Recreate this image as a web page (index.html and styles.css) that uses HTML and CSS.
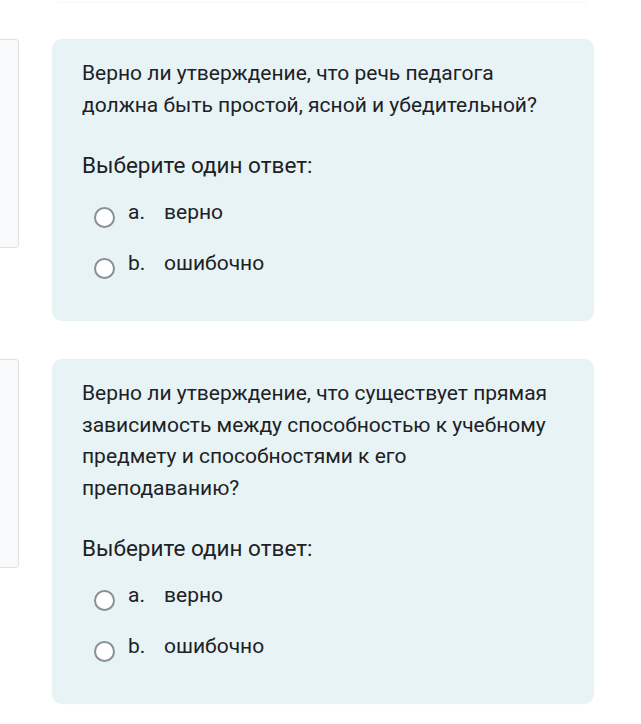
FILE: index.html
```html
<!DOCTYPE html>
<html lang="ru">
<head>
  <meta charset="UTF-8" />
  <meta name="viewport" content="width=device-width, initial-scale=1.0"/>
  <title>Тест</title>
  <link rel="stylesheet" href="styles.css">
</head>
<body>

<div class="prev-card"></div>

<div class="que">
  <div class="info"></div>
  <div class="content">
    <div class="qtext">Верно ли утверждение, что речь педагога должна быть простой, ясной и убедительной?</div>
    <div class="prompt">Выберите один ответ:</div>
    <div class="answer">
      <label class="opt"><span class="radio"></span><span class="letter">a.</span><span>верно</span></label>
      <label class="opt"><span class="radio"></span><span class="letter">b.</span><span>ошибочно</span></label>
    </div>
  </div>
</div>

<div class="que">
  <div class="info"></div>
  <div class="content">
    <div class="qtext">Верно ли утверждение, что существует прямая зависимость между способностью к учебному предмету и способностями к его преподаванию?</div>
    <div class="prompt">Выберите один ответ:</div>
    <div class="answer">
      <label class="opt"><span class="radio"></span><span class="letter">a.</span><span>верно</span></label>
      <label class="opt"><span class="radio"></span><span class="letter">b.</span><span>ошибочно</span></label>
    </div>
  </div>
</div>

</body>
</html>
```

FILE: styles.css
```css
body {
  margin: 0;
  background: #fff;
  font-family: Roboto, "Noto Sans", sans-serif;
  color: #1d2125;
}
.prev-card {
  height: 1px;
  margin: 0 53px 38px 57px;
  background: #fff;
  border-radius: 0 0 8px 8px;
  box-shadow: 0 1px 3px rgba(0, 0, 0, 0.08);
}
.que {
  display: flex;
  align-items: flex-start;
  gap: 33px;
  margin-bottom: 38px;
}
.info {
  width: 18px;
  height: 207px;
  background: #f8f9fa;
  border: 1px solid #dee2e6;
  border-left: none;
  border-radius: 0 4px 4px 0;
}
.content {
  width: 542px;
  box-sizing: border-box;
  padding: 19px 30px 42px 30px;
  background: #e7f3f5;
  border-radius: 10px;
  box-shadow: 0 0 2px rgba(0, 0, 0, 0.03);
}
.qtext {
  font-size: 21px;
  line-height: 31.5px;
}
.prompt {
  font-size: 22.5px;
  line-height: 30px;
  margin-top: 29px;
  margin-bottom: 17px;
}
.answer {
  padding-left: 12px;
}
.opt {
  display: flex;
  align-items: flex-start;
  font-size: 21px;
  line-height: 30px;
  margin-bottom: 20px;
}
.opt:last-child {
  margin-bottom: 0;
}
.radio {
  width: 17px;
  height: 17px;
  margin-top: 10px;
  margin-right: 13px;
  border: 2px solid #8a8f95;
  border-radius: 50%;
  background: #fff;
  flex-shrink: 0;
}
.letter {
  width: 36px;
}
```
